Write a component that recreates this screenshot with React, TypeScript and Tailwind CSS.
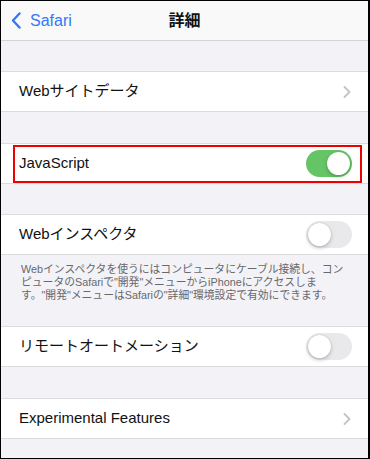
import React from "react";

const font = { fontFamily: '"Liberation Sans", "Noto Sans CJK JP", sans-serif' };

function Toggle({ on }: { on: boolean }) {
  return (
    <div
      className={
        "relative w-[46px] h-[27px] rounded-full " +
        (on ? "bg-[#65c466]" : "bg-[#e9e9eb]")
      }
    >
      <div
        className={
          "absolute top-[2px] w-[23px] h-[23px] rounded-full bg-white shadow-[0_2px_4px_rgba(0,0,0,0.2),0_0_1px_rgba(0,0,0,0.25)] " +
          (on ? "left-[21px]" : "left-[2px]")
        }
      />
    </div>
  );
}

function Chevron() {
  return (
    <svg width="8" height="12" viewBox="0 0 8 12" className="mr-[1px]">
      <polyline points="1.5,1 6.5,6 1.5,11" fill="none" stroke="#c4c4c7" strokeWidth="1.8" strokeLinecap="round" strokeLinejoin="round" />
    </svg>
  );
}

function Row({ label, right, children }: { label: string; right: React.ReactNode; children?: React.ReactNode }) {
  return (
    <div className="relative flex items-center justify-between h-[41px] bg-white border-y border-[#dcdce0] pl-[18px] pr-[16px]">
      <span className="text-[15px] text-[#111]">{label}</span>
      {right}
      {children}
    </div>
  );
}

export default function App() {
  return (
    <div
      style={font}
      className="w-[370px] h-[459px] overflow-hidden bg-[#f2f2f7] border border-black border-r-2 flex flex-col"
    >
      <div className="relative flex items-center justify-center h-[40px] shrink-0 bg-[#f9f9fa] border-b border-[#d4d4d8]">
        <div className="absolute left-[10px] top-0 h-full flex items-center gap-[9px]">
          <svg width="10" height="17" viewBox="0 0 10 17">
            <polyline points="8.5,1.5 2,8.5 8.5,15.5" fill="none" stroke="#3478f6" strokeWidth="2.4" strokeLinecap="round" strokeLinejoin="round" />
          </svg>
          <span className="text-[16px] text-[#3478f6]">Safari</span>
        </div>
        <span className="text-[16px] font-bold text-[#111]">詳細</span>
      </div>
      <div className="h-[30px] shrink-0" />
      <Row label="Webサイトデータ" right={<Chevron />} />
      <div className="h-[31px] shrink-0" />
      <Row label="JavaScript" right={<Toggle on />}>
        <div className="absolute left-[12px] right-[6px] top-[1px] bottom-[0px] border-2 border-[#ee0000] pointer-events-none" />
      </Row>
      <div className="h-[30px] shrink-0" />
      <Row label="Webインスペクタ" right={<Toggle on={false} />} />
      <div className="pl-[20px] pt-[8px] h-[71px] shrink-0 text-[10.8px] leading-[13px] text-[#68686d] whitespace-nowrap">
        Webインスペクタを使うにはコンピュータにケーブル接続し、コン
        <br />
        ピュータのSafariで"開発"メニューからiPhoneにアクセスしま
        <br />
        す。"開発"メニューはSafariの"詳細"環境設定で有効にできます。
      </div>
      <Row label="リモートオートメーション" right={<Toggle on={false} />} />
      <div className="h-[31px] shrink-0" />
      <Row label="Experimental Features" right={<Chevron />} />
    </div>
  );
}
